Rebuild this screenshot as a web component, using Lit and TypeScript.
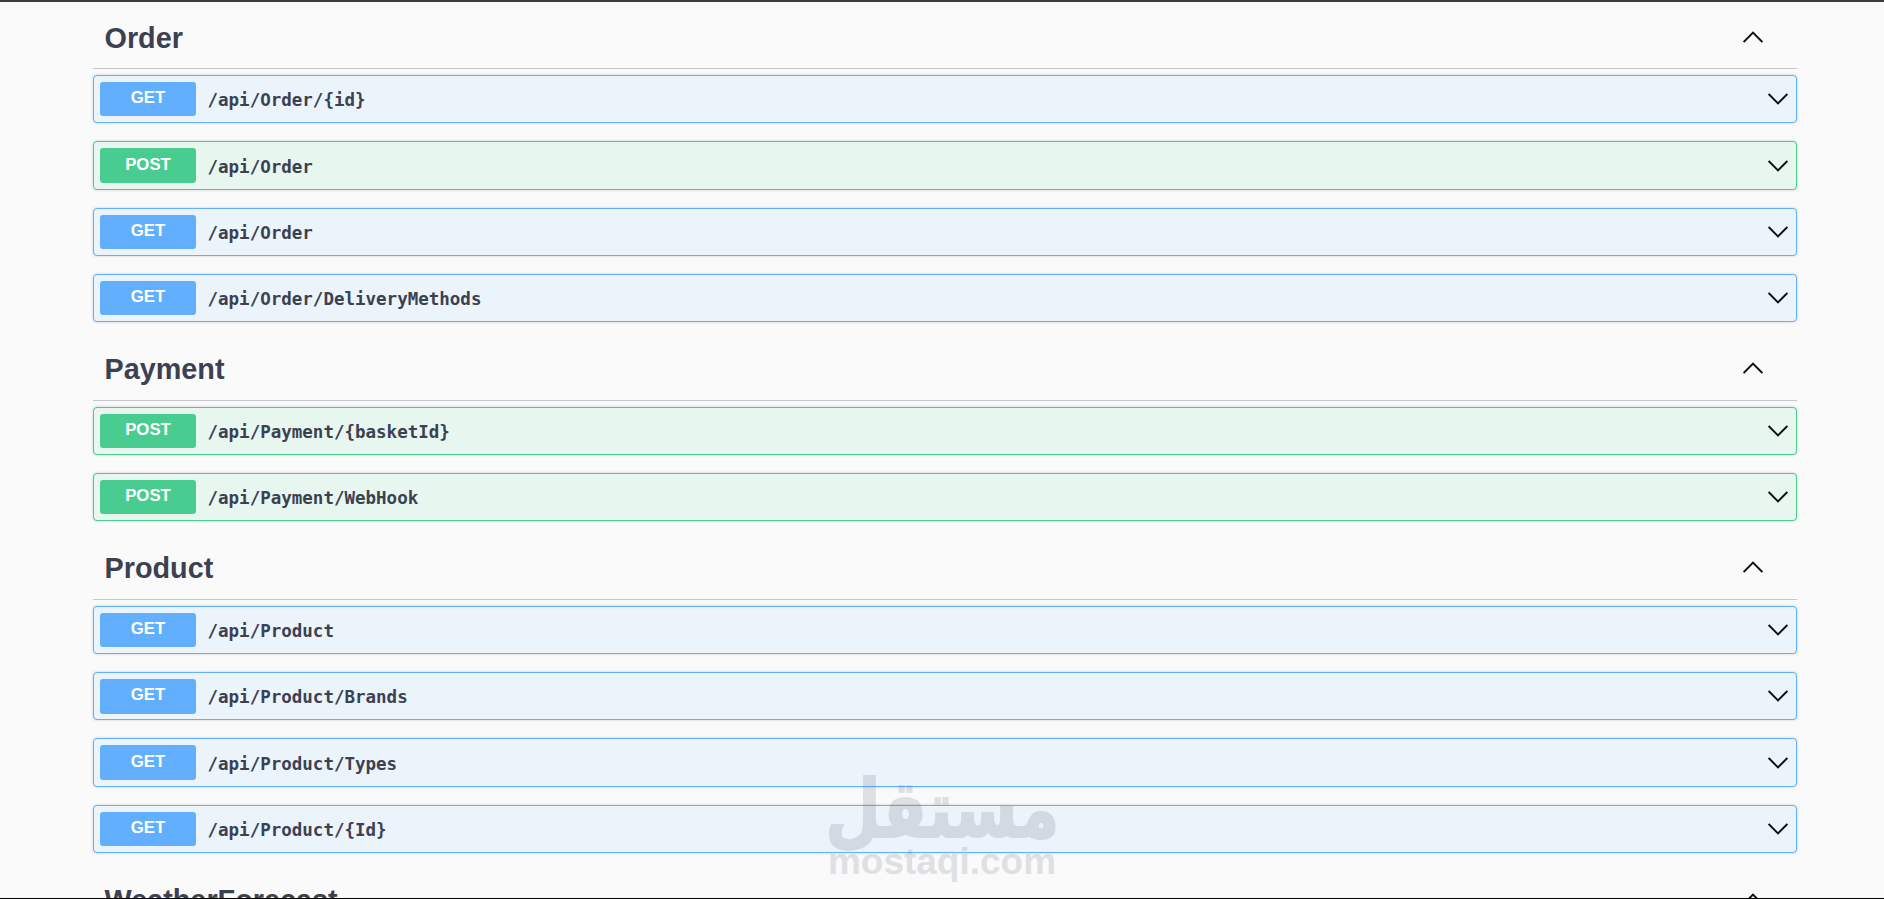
import { LitElement, html, css, svg } from "lit";
import { customElement } from "lit/decorators.js";

type Op = [string, string];
const sections: { name: string; ops: Op[] }[] = [
  { name: "Order", ops: [["GET", "/api/Order/{id}"], ["POST", "/api/Order"], ["GET", "/api/Order"], ["GET", "/api/Order/DeliveryMethods"]] },
  { name: "Payment", ops: [["POST", "/api/Payment/{basketId}"], ["POST", "/api/Payment/WebHook"]] },
  { name: "Product", ops: [["GET", "/api/Product"], ["GET", "/api/Product/Brands"], ["GET", "/api/Product/Types"], ["GET", "/api/Product/{Id}"]] },
  { name: "WeatherForecast", ops: [] },
];

const chevron = (up: boolean) => html`<svg class="chev" viewBox="0 0 20 20" width="20" height="20" aria-hidden="true">
  ${svg`<path d=${up ? "M0.6 15 L10 5.6 L19.4 15" : "M0.6 5 L10 14.4 L19.4 5"} fill="none" stroke="#111" stroke-width="2"/>`}
</svg>`;

@customElement("app-root")
export class AppRoot extends LitElement {
  static styles = css`
    :host { display: block; height: 899px; overflow: hidden; position: relative; background: #fafafa; font-family: "Liberation Sans", Arial, sans-serif; color: #3b4151; }
    .top { height: 2px; background: #3b3b3b; }
    .wrap { padding: 6.7px 87px 0 93px; }
    .head { height: 60.65px; border-bottom: 1px solid #c3c6cc; display: flex; align-items: center; justify-content: space-between; padding: 0 34px 4px 11.5px; box-sizing: border-box; margin-bottom: 5.7px; }
    .head h2 { margin: 0; padding-top: 3px; font-size: 28.8px; font-weight: 700; line-height: 1; }
    .row { height: 48.35px; box-sizing: border-box; margin-bottom: 18px; border: 1px solid; border-radius: 4px; display: flex; align-items: center; padding: 0 8px 0 6px; box-shadow: 0 0 3px rgba(0,0,0,.19); }
    .row.get { background: #ebf3fb; border-color: #61affe; }
    .row.post { background: #e8f6f0; border-color: #49cc90; }
    .badge { width: 96px; height: 34.5px; flex: none; border-radius: 3px; color: #fff; font-weight: 700; font-size: 16.8px; display: flex; align-items: center; justify-content: center; padding-bottom: 2px; box-sizing: border-box; }
    .get .badge { background: #61affe; }
    .post .badge { background: #49cc90; }
    .path { flex: 1; margin-left: 11.5px; padding-top: 2px; font-family: "DejaVu Sans Mono", "Liberation Mono", monospace; font-weight: 700; font-size: 17.5px; }
    .chev { flex: none; display: block; }
    .bottom { position: absolute; left: 0; right: 0; bottom: 0; height: 1px; background: #000; }
    .mark { position: absolute; left: 829px; width: 226px; top: 768px; display: flex; flex-direction: column; align-items: center; color: rgb(70,80,100); opacity: .15; pointer-events: none; }
    .ar { font-family: "DejaVu Sans", sans-serif; font-weight: 700; font-size: 80px; line-height: 84px; direction: rtl; white-space: nowrap; transform: scaleX(.8); -webkit-text-stroke: 2px rgb(70,80,100); }
    .en { font-weight: 700; font-size: 37px; line-height: 37px; margin-top: -9.5px; }
  `;
  render() {
    return html`
      <div class="top"></div>
      <div class="wrap">
        ${sections.map(
          (s) => html`<section>
            <div class="head"><h2>${s.name}</h2>${chevron(true)}</div>
            ${s.ops.map(
              ([m, p]) => html`<div class="row ${m.toLowerCase()}">
                <span class="badge">${m}</span><span class="path">${p}</span>${chevron(false)}
              </div>`
            )}
          </section>`
        )}
      </div>
      <div class="mark"><span class="ar">مستقل</span><span class="en">mostaqi.com</span></div>
      <div class="bottom"></div>
    `;
  }
}
